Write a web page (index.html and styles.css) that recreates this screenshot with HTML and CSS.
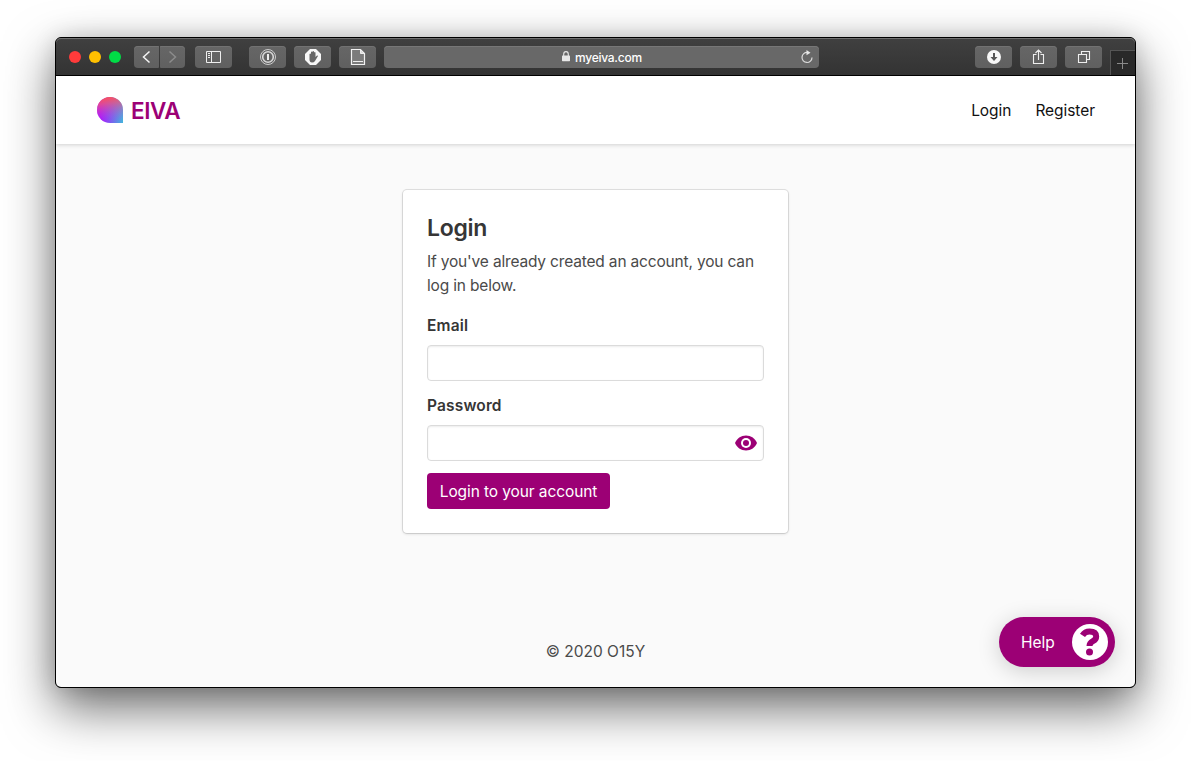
FILE: index.html
```html
<!DOCTYPE html>
<html lang="en">
<head>
<meta charset="utf-8">
<title>EIVA Login</title>
<link rel="stylesheet" href="styles.css">
</head>
<body>
<div class="window">
  <div class="toolbar">
    <div class="lights"><span class="light red"></span><span class="light amber"></span><span class="light green"></span></div>
    <div class="history">
      <span class="tool back"><svg width="25" height="22" viewBox="0 0 25 22"><path d="M15.500 5.500 9.500 11l6 5.500" fill="none" stroke="#f4f4f4" stroke-width="1.500"/></svg></span>
      <span class="tool forward"><svg width="25" height="22" viewBox="0 0 25 22"><path d="M9.500 5.500 15.500 11l-6 5.500" fill="none" stroke="#8c8c8c" stroke-width="1.500"/></svg></span>
    </div>
    <span class="tool sidebar"><svg width="37" height="22" viewBox="0 0 37 22"><path d="M11.500 5.500h14v11h-14zM16.500 5.500v11M13 7.500h2M13 9.500h2M13 11.500h2" fill="none" stroke="#eee"/></svg></span>
    <div class="extensions">
      <span class="tool"><svg width="37" height="22" viewBox="0 0 37 22"><circle cx="19" cy="11" r="7.500" fill="none" stroke="#ccc"/><circle cx="19" cy="11" r="5.300" fill="none" stroke="#d8d8d8" stroke-width="1.600"/><path d="M19 8v6" stroke="#eee" stroke-width="2"/></svg></span>
      <span class="tool"><svg width="37" height="22" viewBox="0 0 37 22"><path d="M16 3h6l5 5v6l-5 5h-6l-5-5V8z" fill="#f7f7f7"/><path d="M15.500 11V8q.8-1 1.500 0V6q.8-1 1.500 0V5.500q.8-1 1.500 0V6.500q.8-.8 1.500 0V11l1.500-1.500q1-.2 1 .6L21 15q-1 1.500-3 1.500-2.500 0-2.500-3z" fill="#666"/></svg></span>
      <span class="tool"><svg width="37" height="22" viewBox="0 0 37 22"><path d="M12.500 3.500h9l4 4v11h-13z" fill="#7c7c7c" stroke="#f2f2f2" stroke-width="1.200"/><path d="M21.500 3.500v4h4z" fill="#ddd" stroke="#eee"/><path d="M14 15.500h10" stroke="#eee"/></svg></span>
    </div>
    <div class="address">
      <svg class="lock" width="8" height="11" viewBox="0 0 8 11"><path d="M1.700 5V3.200a2.300 2.600 0 0 1 4.600 0V5" fill="none" stroke="#e8e8e8" stroke-width="1.100"/><rect y="4.600" width="8" height="5.600" rx=".6" fill="#e8e8e8"/></svg>
      <span class="host">myeiva.com</span>
      <svg class="reload" width="14" height="14" viewBox="0 0 14 14"><path d="M7.500 2.500A5 5 0 1 0 12 7.500" fill="none" stroke="#ddd" stroke-width="1.200"/><path d="m6.500 0 4 2.700-4 2.500z" fill="#e8e8e8"/></svg>
    </div>
    <div class="actions">
      <span class="tool"><svg width="37" height="22" viewBox="0 0 37 22"><circle cx="19" cy="11" r="7" fill="#f7f7f7"/><path d="M18 7h2v4h2.500L19 15l-3.500-4H18z" fill="#555"/></svg></span>
      <span class="tool"><svg width="37" height="22" viewBox="0 0 37 22"><path d="M16.500 8.500h-3v9h10v-9h-3M18.500 14V4M15.500 7l3-3 3 3" fill="none" stroke="#eee" stroke-width="1.100"/></svg></span>
      <span class="tool"><svg width="37" height="22" viewBox="0 0 37 22"><path d="M13.500 8.500h8v8h-8zM16.500 8.500v-3h8v8h-3" fill="none" stroke="#eee" stroke-width="1.100"/></svg></span>
    </div>
    <span class="newtab"><svg width="24" height="25" viewBox="0 0 24 25"><path d="M6 12.500h11M11.500 7v11" stroke="#8a8a8a"/></svg></span>
  </div>
  <div class="page">
    <header class="navbar">
      <a class="brand">
        <svg width="26" height="26" viewBox="0 0 26 26"><defs><linearGradient id="base" x1="0" y1="0" x2="1" y2="0"><stop offset=".12" stop-color="#ab10ff"/><stop offset="1" stop-color="#43b5dc"/></linearGradient><linearGradient id="warm" x1=".35" y1="0" x2=".5" y2="1"><stop offset="0" stop-color="#ff4f55"/><stop offset=".25" stop-color="#f0567a" stop-opacity=".75"/><stop offset="1" stop-color="#b040ff" stop-opacity="0"/></linearGradient></defs><path d="M13 0a13 13 0 0 1 13 13v13H13a13 13 0 0 1 0-26z" fill="url(#base)"/><path d="M13 0a13 13 0 0 1 13 13v13H13a13 13 0 0 1 0-26z" fill="url(#warm)"/></svg>
        <span class="brand-name">EIVA</span>
      </a>
      <nav class="links"><a>Login</a><a>Register</a></nav>
    </header>
    <main class="content">
      <form class="card">
        <h1 class="title">Login</h1>
        <p class="intro">If you've already created an account, you can<br>log in below.</p>
        <label class="label">Email</label>
        <div class="field"></div>
        <label class="label">Password</label>
        <div class="field password"><svg width="22" height="16" viewBox="0 0 22 16"><path d="M11 .5C6 .5 1.700 3.500 0 8c1.700 4.500 6 7.500 11 7.500S20.300 12.500 22 8C20.300 3.500 16 .5 11 .5z" fill="#9c0075"/><circle cx="11" cy="8" r="5" fill="#fff"/><circle cx="11" cy="8" r="3" fill="#9c0075"/></svg></div>
        <button class="submit" type="button">Login to your account</button>
      </form>
    </main>
    <footer class="footer">© 2020 O15Y</footer>
    <div class="help"><span class="help-text">Help</span><svg width="36" height="36" viewBox="0 0 36 36"><circle cx="18" cy="18" r="18" fill="#fff"/><path d="M10.500 11.300Q13 7.500 17.500 7.500q6.700 0 6.700 5 0 2.900-3.300 4.700-3.400 1.800-3.400 4.800" fill="none" stroke="#9c0075" stroke-width="6"/><circle cx="17.500" cy="28" r="3.500" fill="#9c0075"/></svg></div>
  </div>
</div>
</body>
</html>
```
FILE: styles.css
```css
* { box-sizing: border-box; }
body { margin: 0; height: 761px; overflow: hidden; background: #fff; padding: 37px 55px; font: 15.5px/24px Inter, sans-serif; color: #4a4a4a; }
svg { display: block; flex: none; }
.window { width: 1081px; height: 651px; border: 1px solid #000; border-radius: 6px; background: #000; box-shadow: 0 20px 50px rgba(0,0,0,.58), 0 0 22px rgba(0,0,0,.13); }
.toolbar { height: 37px; display: flex; align-items: center; padding-left: 13px; border-radius: 5px 5px 0 0; background: linear-gradient(#404040, #333); box-shadow: inset 0 1px #707070; }
.lights { display: flex; gap: 8px; margin-right: 13px; }
.light { width: 12px; height: 12px; border-radius: 50%; }
.red { background: #ff3b3b; }
.amber { background: #ffc000; }
.green { background: #00dc46; }
.history { display: flex; gap: 1px; margin-right: 10px; }
.tool { width: 37px; height: 22px; border-radius: 4px; background: linear-gradient(#666, #606060); box-shadow: inset 0 1px #727272; }
.back, .forward { width: 25px; }
.back { border-radius: 4px 1px 1px 4px; }
.forward { border-radius: 1px 4px 4px 1px; }
.sidebar { margin-right: 17px; }
.extensions, .actions { display: flex; gap: 8px; }
.address { display: flex; align-items: center; width: 435px; height: 22px; margin: 0 156px 0 8px; padding: 0 5px 0 178px; border-radius: 4px; background: #686868; box-shadow: inset 0 1px #777; color: #fff; font-size: 12px; font-weight: 500; letter-spacing: -.25px; }
.host { padding-top: 2px; }
.lock { margin-right: 5px; }
.reload { margin-left: auto; }
.newtab { width: 25px; height: 25px; margin-left: 8px; align-self: flex-end; border: 1px solid #555; border-width: 1px 0 0 1px; background: #292929; }
.page { position: relative; margin-top: 1px; height: 611px; display: flex; flex-direction: column; background: #fafafa; border-radius: 0 0 5px 5px; overflow: hidden; }
.navbar { height: 68px; flex: none; display: flex; align-items: center; justify-content: space-between; padding: 0 40px 0 41px; background: #fff; box-shadow: 0 1px 4px rgba(0,0,0,.17); }
.brand { display: flex; align-items: center; gap: 8px; }
.brand-name { padding-top: 2px; color: #9c0075; font-size: 22.500px; font-weight: 600; letter-spacing: -.45px; }
.links { display: flex; gap: 24px; padding-top: 2px; color: #111; letter-spacing: -.05px; }
.content { display: flex; justify-content: center; padding-top: 46px; }
.card { width: 385px; height: 343px; padding: 25px 24px 24px; border-radius: 4px; background: #fff; box-shadow: 0 0 0 1px rgba(10,10,10,.1), 0 1px 3px rgba(10,10,10,.14); }
.title { margin: 0 0 8px; color: #363636; font-size: 23px; line-height: 27px; font-weight: 600; letter-spacing: -.3px; }
.intro { margin: 0 0 16px; letter-spacing: -.17px; white-space: nowrap; }
.label { display: block; margin-bottom: 7px; color: #363636; font-weight: 600; letter-spacing: .15px; }
.field { height: 36px; margin-bottom: 13px; padding-right: 6px; display: flex; align-items: center; justify-content: flex-end; border: 1px solid #dbdbdb; border-radius: 4px; background: #fff; box-shadow: inset 0 1px 2px rgba(10,10,10,.08); }
.password { margin-bottom: 12px; }
.submit { display: block; width: 183px; height: 36px; padding: 2px 0 0; border: 0; border-radius: 4px; background: #9c0075; color: #fff; font: inherit; letter-spacing: -.1px; }
.footer { margin-top: 107px; text-align: center; }
.help { position: absolute; right: 20px; bottom: 20px; width: 116px; height: 50px; padding: 0 7px 0 22px; display: flex; align-items: center; justify-content: space-between; border-radius: 25px; background: #9c0075; color: #fff; box-shadow: 0 4px 22px rgba(0,0,0,.18); }
.help-text { padding-top: 2px; }
```
